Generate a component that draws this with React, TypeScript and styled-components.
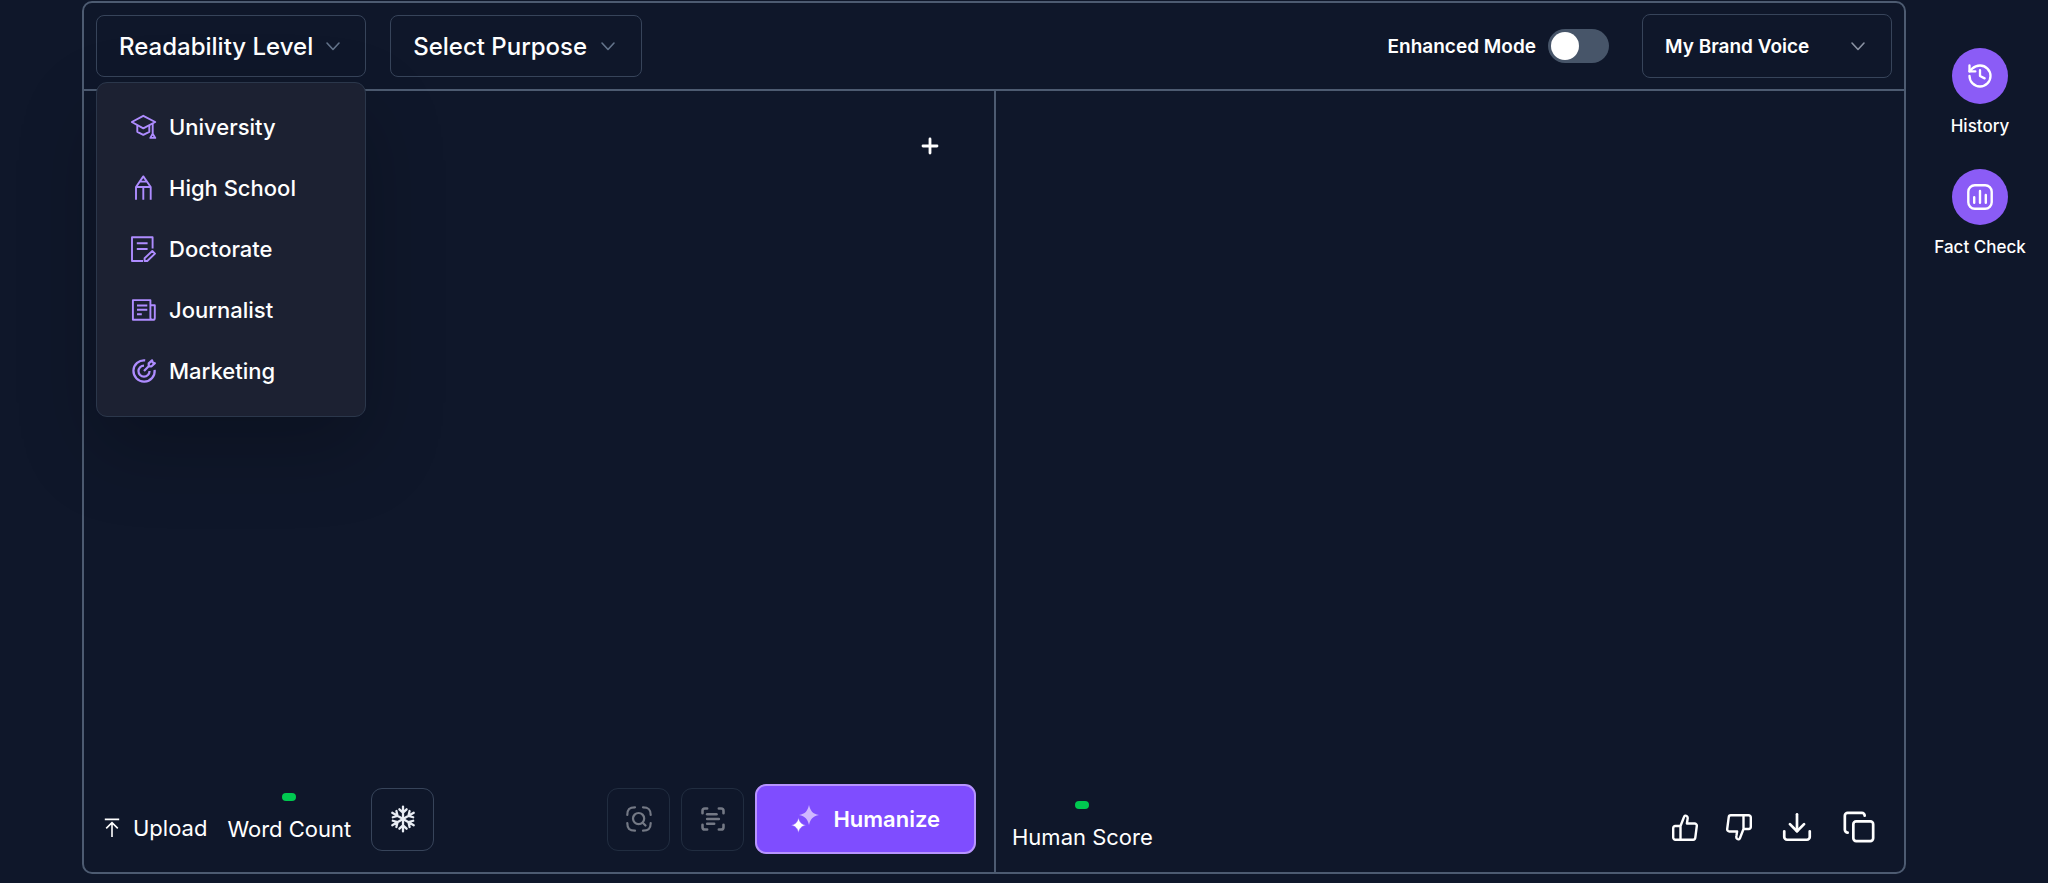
import React, { useState } from "react";
import styled, { createGlobalStyle } from "styled-components";
import { Copy, Download, History, Plus, ScanText } from "lucide-react";

const color = {
  page: "#0f172a",
  panel: "#1c2132",
  frame: "#4d5b71",
  track: "#475569",
  line: "#37445a",
  faint: "#212d40",
  text: "#ffffff",
  muted: "#64748b",
  lilac: "#ae8cff",
  violet: "#8b5cf6",
  action: "#7f4dff",
  green: "#00c950",
};

const GlobalStyle = createGlobalStyle`
  *, *::before, *::after { box-sizing: border-box; }
  body {
    margin: 0;
    background: ${color.page};
    color: ${color.text};
    font-family: Inter, "Liberation Sans", sans-serif;
    -webkit-font-smoothing: antialiased;
  }
  button, select, textarea, input { font: inherit; color: inherit; }
  svg { display: block; flex: none; }
`;

const Page = styled.div`
  display: flex;
  min-height: 100vh;
  padding: 1px 0 9px 82px;
`;

const Frame = styled.main`
  flex: 1;
  min-width: 0;
  display: flex;
  flex-direction: column;
  border: 2px solid ${color.frame};
  border-radius: 10px;
`;

const Toolbar = styled.header`
  display: flex;
  align-items: center;
  justify-content: space-between;
  padding: 11px 12px;
  border-bottom: 2px solid ${color.frame};
`;

const ToolGroup = styled.div<{ $gap: number }>`
  display: flex;
  align-items: center;
  gap: ${(p) => p.$gap}px;
`;

const Dropdown = styled.div`
  position: relative;
`;

const Trigger = styled.button`
  display: flex;
  align-items: center;
  gap: 12px;
  height: 62px;
  padding: 0 24px 0 22px;
  border: 1px solid ${color.line};
  border-radius: 8px;
  background: transparent;
  color: ${color.text};
  font-size: 24px;
  font-weight: 500;
  white-space: nowrap;
  cursor: pointer;
`;

const Picker = styled.select<{ $compact?: boolean }>`
  appearance: none;
  display: block;
  height: ${(p) => (p.$compact ? 64 : 62)}px;
  width: ${(p) => (p.$compact ? "250px" : "auto")};
  padding: 0 54px 0 22px;
  border: 1px solid ${color.line};
  border-radius: 8px;
  background: ${color.page};
  color: ${color.text};
  font-size: ${(p) => (p.$compact ? 19 : 24)}px;
  font-weight: ${(p) => (p.$compact ? 600 : 500)};
  cursor: pointer;
`;

const PickerArrow = styled.span`
  position: absolute;
  inset: 0 26px 0 auto;
  display: flex;
  align-items: center;
  pointer-events: none;
`;

const Menu = styled.ul`
  position: absolute;
  top: calc(100% + 5px);
  left: 0;
  z-index: 2;
  width: 100%;
  margin: 0;
  padding: 13px 0 15px;
  list-style: none;
  border: 1px solid #2b374b;
  border-radius: 11px;
  background: ${color.panel};
  box-shadow: 0 32px 80px rgba(0, 0, 0, 0.22);
`;

const MenuItem = styled.button`
  display: flex;
  align-items: center;
  gap: 12px;
  width: 100%;
  height: 61px;
  padding: 0 34px;
  border: 0;
  background: transparent;
  font-size: 22px;
  font-weight: 500;
  text-align: left;
  cursor: pointer;

  svg { color: ${color.lilac}; }
`;

const SwitchLabel = styled.label`
  display: flex;
  align-items: center;
  gap: 12px;
  font-size: 19px;
  font-weight: 600;
  white-space: nowrap;
`;

const Switch = styled.input`
  appearance: none;
  width: 61px;
  height: 34px;
  margin: 0;
  padding: 3px;
  border-radius: 17px;
  background: ${color.track};
  cursor: pointer;

  &::before {
    content: "";
    display: block;
    width: 28px;
    height: 28px;
    border-radius: 50%;
    background: #fff;
  }
  &:checked { background: ${color.violet}; }
  &:checked::before { margin-left: auto; }
`;

const Panes = styled.div`
  flex: 1;
  display: grid;
  grid-template-columns: 1fr 1fr;
`;

const Pane = styled.section`
  display: flex;
  flex-direction: column;
  min-width: 0;

  & + & { border-left: 2px solid ${color.frame}; }
`;

const EditorRow = styled.div`
  flex: 1;
  display: flex;
  align-items: flex-start;
  padding: 43px 52px 0 20px;
`;

const Editor = styled.textarea`
  flex: 1;
  align-self: stretch;
  min-width: 0;
  border: 0;
  outline: 0;
  resize: none;
  background: transparent;
  font-size: 22px;
`;

const Output = styled.div`
  flex: 1;
`;

const IconButton = styled.button`
  display: flex;
  padding: 0;
  border: 0;
  background: transparent;
  color: ${color.text};
  cursor: pointer;
`;

const PaneFooter = styled.footer<{ $wide?: boolean }>`
  display: flex;
  align-items: center;
  justify-content: space-between;
  padding: ${(p) => (p.$wide ? "0 28px 19px 16px" : "0 18px 18px 20px")};
`;

const Upload = styled.button`
  display: flex;
  align-items: center;
  align-self: flex-end;
  gap: 13px;
  margin-bottom: 7px;
  padding: 0;
  border: 0;
  background: transparent;
  font-size: 22px;
  line-height: 32px;
  cursor: pointer;
`;

const Metric = styled.div`
  display: flex;
  flex-direction: column;
  align-items: center;
  gap: 12px;
  font-size: 22px;
  line-height: 32px;
  white-space: nowrap;

  &::before {
    content: "";
    width: 14px;
    height: 8px;
    border-radius: 4px;
    background: ${color.green};
  }
`;

const SquareButton = styled.button`
  display: flex;
  align-items: center;
  justify-content: center;
  width: 63px;
  height: 63px;
  padding: 0;
  border: 1px solid ${color.line};
  border-radius: 11px;
  background: transparent;
  color: #e8ecf3;
  cursor: pointer;

  &:disabled {
    border-color: ${color.faint};
    color: #747985;
    cursor: default;
  }
`;

const PrimaryButton = styled.button`
  display: flex;
  align-items: center;
  gap: 14px;
  height: 70px;
  padding: 0 34px;
  border: 2px solid #b794ff;
  border-radius: 11px;
  background: ${color.action};
  font-size: 22px;
  font-weight: 600;
  cursor: pointer;
`;

const Rail = styled.nav`
  display: flex;
  flex-direction: column;
  gap: 31px;
  width: 136px;
  margin-left: 6px;
  padding-top: 47px;
`;

const RailButton = styled.button`
  display: flex;
  flex-direction: column;
  align-items: center;
  gap: 10px;
  padding: 0;
  border: 0;
  background: transparent;
  font-size: 17px;
  font-weight: 500;
  line-height: 24px;
  cursor: pointer;
`;

const Disc = styled.span`
  display: flex;
  align-items: center;
  justify-content: center;
  width: 56px;
  height: 56px;
  border-radius: 50%;
  background: ${color.violet};
`;

const Chevron = ({ stroke = color.muted }: { stroke?: string }) => (
  <svg width="16" height="16" viewBox="0 0 16 16" fill="none" stroke={stroke} strokeWidth="1.6" strokeLinecap="round" strokeLinejoin="round" aria-hidden="true">
    <path d="M2 5l6 6.5L14 5" />
  </svg>
);

const LineIcon = ({ children, viewBox = "0 0 26 26" }: { children: React.ReactNode; viewBox?: string }) => (
  <svg width="26" height="26" viewBox={viewBox} fill="none" stroke="currentColor" strokeWidth="1.9" strokeLinejoin="round" aria-hidden="true">
    {children}
  </svg>
);

const levels = [
  {
    name: "University",
    icon: (
      <LineIcon>
        <path d="M12.3 1.8L24.2 8 12.3 14.4.8 8z" />
        <path d="M6.3 11.2v6.6l6 3 6-3v-6.6M21.7 9.3v10.4l-2.4 4.2h5l-2.6-4.2" />
      </LineIcon>
    ),
  },
  {
    name: "High School",
    icon: (
      <LineIcon>
        <path d="M5 24.8V12L12.3 1.4 19.7 12v12.8M5 12h14.7M12.3 12v12.8M9 6.6h6.6" />
      </LineIcon>
    ),
  },
  {
    name: "Doctorate",
    icon: (
      <LineIcon>
        <path d="M21.6 12.5V1.2H1V25h11M5.8 7.3h10.8M5.8 13h10.8" />
        <path d="M13.6 25v-2.8l7.7-7.2 2.7 2.6-7.7 7.4z" />
      </LineIcon>
    ),
  },
  {
    name: "Journalist",
    icon: (
      <LineIcon>
        <path d="M19.4 20.8V3.1H1.9v19.7h20a1.9 1.9 0 0 0 1.9-1.9V8.2h-4.4M19.4 20.8a2 2 0 0 0 2 2M6 8.5h10.3M6 12.8h10.3M6 17.2h4.8" />
      </LineIcon>
    ),
  },
  {
    name: "Marketing",
    icon: (
      <LineIcon viewBox="1 1 22 22">
        <path d="M13 3a9 9 0 1 0 8 8M12 7.4a4.7 4.7 0 1 0 4.7 4.7M12 12l4-4M16 8V5.6L18.8 3l.6 1.8 1.8.6L18.4 8z" />
      </LineIcon>
    ),
  },
];

const UploadIcon = () => (
  <svg width="16" height="20" viewBox="0 0 16 20" fill="none" stroke="currentColor" strokeWidth="1.6" aria-hidden="true">
    <path d="M.8 1.4h14.4M8 19V4.6M2.2 10.4L8 4.6l5.800 5.800" />
  </svg>
);

const SnowflakeIcon = () => (
  <svg width="28" height="28" viewBox="0 0 28 28" fill="none" stroke="currentColor" strokeWidth="2.3" strokeLinecap="round" strokeLinejoin="round" aria-hidden="true">
    {[0, 60, 120, 180, 240, 300].map((angle) => (
      <path key={angle} transform={`rotate(${angle} 14 14)`} d="M14 14V1.600M10.400 4.300L14 7.700l3.600-3.400" />
    ))}
  </svg>
);

const FocusSearchIcon = () => (
  <svg width="26" height="26" viewBox="0 0 26 26" fill="none" stroke="currentColor" strokeWidth="2.2" strokeLinecap="round" strokeLinejoin="round" aria-hidden="true">
    <path d="M1.3 9C1.3 3.400 3.400 1.300 9 1.300M17 1.300c5.600 0 7.700 2.100 7.700 7.700M24.700 17c0 5.600-2.100 7.700-7.700 7.700M9 24.700C3.400 24.700 1.300 22.600 1.300 17" />
    <circle cx="12.6" cy="12.6" r="5.6" />
    <path d="M16.7 16.7l2.8 2.8" />
  </svg>
);

const SparkleIcon = () => (
  <svg width="28" height="28" viewBox="0 0 28 28" aria-hidden="true">
    <path fill="#d0b8ff" d="M18 0c1.600 6.400 3.600 8.600 10 10.100-6.400 1.500-8.400 3.700-10 10-1.600-6.300-3.600-8.500-10-10C14.400 8.600 16.400 6.400 18 0z" />
    <path fill="#fff" stroke={color.action} strokeWidth=".6" d="M7.500 12.500c1.300 5 2.800 6.500 7.500 7.700-4.700 1.200-6.200 2.700-7.500 7.700-1.300-5-2.800-6.500-7.500-7.700 4.700-1.200 6.200-2.700 7.500-7.700z" />
  </svg>
);

const ThumbIcon = ({ down = false }: { down?: boolean }) => (
  <svg width="26" height="27" viewBox="0 0 26 27" fill="none" stroke="currentColor" strokeWidth="2.4" strokeLinejoin="round" aria-hidden="true">
    <path
      transform={down ? "rotate(180 13 13.5)" : undefined}
      d="M8.500 12L12 3c.5-1.400 1.700-1.700 2.800-.9 1 .8 1.100 2 .7 3.400l-.6 4h7.600a2.200 2.200 0 0 1 2.300 2.500l-1.500 11.700a2.200 2.200 0 0 1-2.300 2H3.500a2.200 2.200 0 0 1-2.300-2.200V14a2 2 0 0 1 2-2h5.300v13.500"
    />
  </svg>
);

const BarsIcon = () => (
  <svg width="26" height="26" viewBox="0 0 26 26" fill="none" stroke="currentColor" strokeWidth="2.4" strokeLinecap="round" aria-hidden="true">
    <rect x="1.3" y="1.3" width="23.4" height="23.4" rx="6.5" />
    <path d="M7.2 13.200v5.600M13 7v11.800M18.800 11v7.800" />
  </svg>
);

export default function App() {
  const [open, setOpen] = useState(true);

  return (
    <>
      <GlobalStyle />
      <Page>
        <Frame>
          <Toolbar>
            <ToolGroup $gap={24}>
              <Dropdown>
                <Trigger type="button" aria-haspopup="menu" aria-expanded={open} onClick={() => setOpen(!open)}>
                  Readability Level
                  <Chevron />
                </Trigger>
                {open && (
                  <Menu aria-label="Readability Level">
                    {levels.map((level) => (
                      <li key={level.name}>
                        <MenuItem type="button" onClick={() => setOpen(false)}>
                          {level.icon}
                          {level.name}
                        </MenuItem>
                      </li>
                    ))}
                  </Menu>
                )}
              </Dropdown>
              <Dropdown>
                <Picker aria-label="Select Purpose">
                  <option>Select Purpose</option>
                </Picker>
                <PickerArrow>
                  <Chevron />
                </PickerArrow>
              </Dropdown>
            </ToolGroup>
            <ToolGroup $gap={33}>
              <SwitchLabel>
                Enhanced Mode
                <Switch type="checkbox" role="switch" />
              </SwitchLabel>
              <Dropdown>
                <Picker $compact aria-label="My Brand Voice">
                  <option>My Brand Voice</option>
                </Picker>
                <PickerArrow>
                  <Chevron stroke="#8b93a3" />
                </PickerArrow>
              </Dropdown>
            </ToolGroup>
          </Toolbar>

          <Panes>
            <Pane>
              <EditorRow>
                <Editor aria-label="Your text" />
                <IconButton type="button" aria-label="Add">
                  <Plus size={24} strokeWidth={2.8} />
                </IconButton>
              </EditorRow>
              <PaneFooter>
                <ToolGroup $gap={20}>
                  <Upload type="button">
                    <UploadIcon />
                    Upload
                  </Upload>
                  <Metric>Word Count</Metric>
                  <SquareButton type="button" aria-label="Freeze words">
                    <SnowflakeIcon />
                  </SquareButton>
                </ToolGroup>
                <ToolGroup $gap={11}>
                  <SquareButton type="button" aria-label="Detect" disabled>
                    <FocusSearchIcon />
                  </SquareButton>
                  <SquareButton type="button" aria-label="Scan text" disabled>
                    <ScanText size={28} strokeWidth={2.2} />
                  </SquareButton>
                  <PrimaryButton type="button">
                    <SparkleIcon />
                    Humanize
                  </PrimaryButton>
                </ToolGroup>
              </PaneFooter>
            </Pane>
            <Pane>
              <Output aria-live="polite" />
              <PaneFooter $wide>
                <Metric>Human Score</Metric>
                <ToolGroup $gap={28}>
                  <IconButton type="button" aria-label="Like">
                    <ThumbIcon />
                  </IconButton>
                  <IconButton type="button" aria-label="Dislike">
                    <ThumbIcon down />
                  </IconButton>
                  <IconButton type="button" aria-label="Download">
                    <Download size={34} strokeWidth={1.9} />
                  </IconButton>
                  <IconButton type="button" aria-label="Copy">
                    <Copy size={34} strokeWidth={1.9} />
                  </IconButton>
                </ToolGroup>
              </PaneFooter>
            </Pane>
          </Panes>
        </Frame>

        <Rail aria-label="Tools">
          <RailButton type="button">
            <Disc>
              <History size={28} />
            </Disc>
            History
          </RailButton>
          <RailButton type="button">
            <Disc>
              <BarsIcon />
            </Disc>
            Fact Check
          </RailButton>
        </Rail>
      </Page>
    </>
  );
}
